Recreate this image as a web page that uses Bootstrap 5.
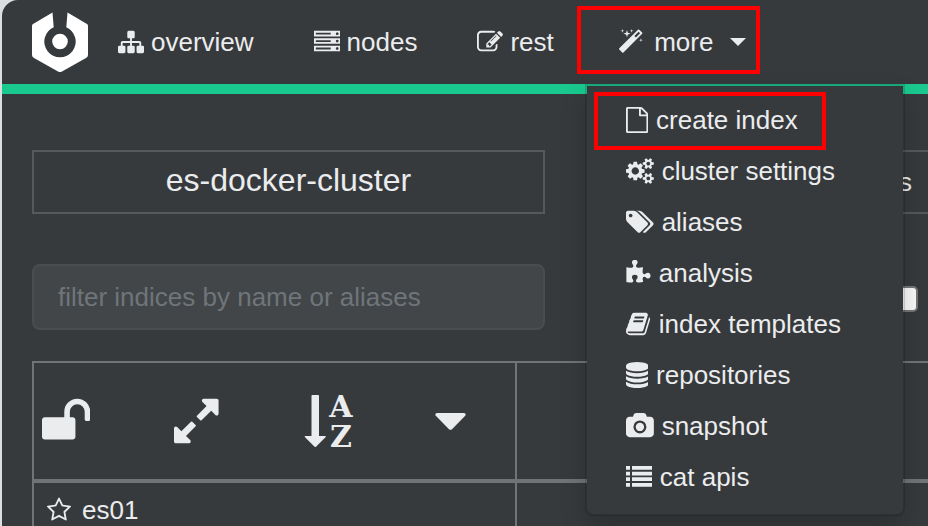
<!DOCTYPE html>
<html lang="en">
<head>
<meta charset="utf-8">
<meta name="viewport" content="width=device-width, initial-scale=1">
<title>es-docker-cluster</title>
<link href="https://cdn.jsdelivr.net/npm/bootstrap@5.3.0/dist/css/bootstrap.min.css" rel="stylesheet">
<style>
  :root { --panel: #373a3c; --ink: #ebecee; --line: #55595c; --grid: #707477; --ok: #1ac98e; --alert: #ff0000; }
  body { background: #dcdee1; color: var(--ink); font: 26px/30px "Liberation Sans", Arial, sans-serif; }
  .shell { margin-left: 2px; background: var(--panel); border-top-left-radius: 16px; }
  .topbar { border-bottom: 10px solid var(--ok); padding: 0 0 0 30px; }
  .topbar .navbar-brand { padding: 12px 0; margin: 0; line-height: 1; }
  .topbar .navbar-nav .nav-link { display: flex; align-items: center; gap: 7px; height: 84px; padding: 0 30px; color: var(--ink); font-size: 26px; border: 0; background: none; }
  .topbar .toggle-more::after { margin: 0 0 0 10px; border-top: 8px solid; border-right: 8px solid transparent; border-left: 8px solid transparent; border-bottom: 0; }
  .ico { height: 26px; width: auto; fill: currentColor; flex: none; }
  .ico-lg { height: 52px; width: auto; fill: currentColor; display: block; }
  .ico-lg text { font: bold 30px "DejaVu Serif", serif; }
  .callout-box { position: relative; }
  .callout-box > .frame { position: absolute; border: 4px solid var(--alert); pointer-events: none; }
  .frame-more { inset: 6px 16px 10px -7px; }
  .frame-create { inset: -13px -28px -15px -32px; }
  .navbar-nav .menu-more { position: absolute; top: 84px; left: 1px; width: 320px; padding: 10px 0; margin: 0; font-size: 26px; background: var(--panel); background-clip: padding-box; border: 2px solid rgba(0,0,0,.15); border-radius: 0 0 8px 8px; box-shadow: 0 12px 24px rgba(0,0,0,.175); }
  .menu-more .dropdown-item { display: flex; align-items: flex-start; padding: 9px 39px 12px; line-height: 30px; color: var(--ink); background: none; }
  .entry { display: inline-flex; align-items: center; gap: 8px; }
  .content-area { padding: 56px 0 0 30px; }
  .left-col { width: 513px; flex: none; }
  .stat { border: 2px solid var(--line); height: 64px; }
  .stat-title { font-size: 32px; line-height: 56px; font-weight: 400; margin: 0; }
  .filter-row { margin: 50px 0 31px; }
  .filter-box.form-control { height: 66px; padding: 0 24px; font-size: 26px; color: var(--ink); background: #434648; border: 2px solid #4b4c4e; border-radius: 8px; }
  .filter-box::placeholder { color: #6f757a; opacity: 1; }
  .tick.form-check-input { width: 26px; height: 26px; margin: 3px 10px 0 0; background-color: #fafafa; border: 2px solid #767676; border-radius: 5px; }
  .grid-table { table-layout: fixed; width: 100%; border-collapse: separate; border-spacing: 0; border-left: 2px solid var(--grid); border-top: 2px solid var(--grid); }
  .grid-table th, .grid-table td { font-weight: 400; padding: 0; }
  .grid-table th { height: 120px; border-bottom: 4px solid var(--grid); }
  .grid-table td { height: 58px; }
  .grid-table th:first-child, .grid-table td:first-child { width: 483px; border-right: 2px solid var(--grid); }
  .tool { border: 0; background: none; padding: 0; color: inherit; flex: 0 0 auto; }
  .tools { padding-left: 8px; gap: 84px; }
  .node-name { gap: 10px; padding-left: 12px; }
</style>
<script src="https://cdn.jsdelivr.net/npm/bootstrap@5.3.0/dist/js/bootstrap.bundle.min.js"></script>
</head>
<body class="vh-100 overflow-hidden">
<div class="shell min-vh-100">
  <nav class="topbar navbar navbar-expand align-items-start">
    <a class="navbar-brand" href="#" aria-label="Home">
      <svg width="56" height="60" viewBox="0 0 56 60" class="d-block"><path d="M20.500.5 1 12Q0 12.600 0 14V43Q0 45 2 46L26 59.500Q28 60.500 30 59.500L54 46Q56 45 56 43V14Q56 12.600 55 12L35.500.5 34.300 15.200A15.700 15.700 0 1 1 21.700 15.200Z" fill="#fff"/><circle cx="28" cy="29.500" r="7.800" fill="#fff"/></svg>
    </a>
    <ul class="navbar-nav">
      <li class="nav-item"><a class="nav-link" href="#">
        <svg class="ico" viewBox="0 0 1792 1792"><path d="M1792 1248v320q0 40-28 68t-68 28h-320q-40 0-68-28t-28-68v-320q0-40 28-68t68-28h96v-192h-512v192h96q40 0 68 28t28 68v320q0 40-28 68t-68 28h-320q-40 0-68-28t-28-68v-320q0-40 28-68t68-28h96v-192h-512v192h96q40 0 68 28t28 68v320q0 40-28 68t-68 28h-320q-40 0-68-28t-28-68v-320q0-40 28-68t68-28h96v-192q0-52 38-90t90-38h512v-192h-96q-40 0-68-28t-28-68v-320q0-40 28-68t68-28h320q40 0 68 28t28 68v320q0 40-28 68t-68 28h-96v192h512q52 0 90 38t38 90v192h96q40 0 68 28t28 68z"/></svg>overview</a></li>
      <li class="nav-item"><a class="nav-link" href="#">
        <svg class="ico" viewBox="0 0 1792 1792"><path d="M128 1408h1024v-128h-1024v128zm0-512h1024v-128h-1024v128zm1568 448q0-40-28-68t-68-28-68 28-28 68 28 68 68 28 68-28 28-68zm-1568-960h1024v-128h-1024v128zm1568 448q0-40-28-68t-68-28-68 28-28 68 28 68 68 28 68-28 28-68zm0-512q0-40-28-68t-68-28-68 28-28 68 28 68 68 28 68-28 28-68zm96 832v384h-1792v-384h1792zm0-512v384h-1792v-384h1792zm0-512v384h-1792v-384h1792z"/></svg>nodes</a></li>
      <li class="nav-item"><a class="nav-link" href="#">
        <svg class="ico" viewBox="0 0 1792 1792"><path d="M888 1184l116-116-152-152-116 116v56h96v96h56zm440-720q-16-16-33 1l-350 350q-17 17-1 33t33-1l350-350q17-17 1-33zm80 594v190q0 119-84.500 203.500t-203.500 84.500h-832q-119 0-203.500-84.500t-84.500-203.500v-832q0-119 84.500-203.500t203.500-84.500h832q63 0 117 25 15 7 18 23 3 17-9 29l-49 49q-14 14-32 8-23-6-45-6h-832q-66 0-113 47t-47 113v832q0 66 47 113t113 47h832q66 0 113-47t47-113v-126q0-13 9-22l64-64q15-15 35-7t20 29zm-96-738l288 288-672 672h-288v-288zm444 132l-92 92-288-288 92-92q28-28 68-28t68 28l152 152q28 28 28 68t-28 68z"/></svg>rest</a></li>
      <li class="nav-item dropdown callout-box">
        <button type="button" class="nav-link dropdown-toggle toggle-more show" data-bs-toggle="dropdown" data-bs-display="static" aria-expanded="true">
          <svg class="ico" viewBox="-256 0 2304 1792"><path d="M1254 581l293-293-107-107-293 293zm447-293q0 27-18 45l-1286 1286q-18 18-45 18t-45-18l-198-198q-18-18-18-45t18-45l1286-1286q18-18 45-18t45 18l198 198q18 18 18 45zm-1351-190l98 30-98 30-30 98-30-98-98-30 98-30 30-98zm350 162l196 60-196 60-60 196-60-196-196-60 196-60 60-196zm930 478l98 30-98 30-30 98-30-98-98-30 98-30 30-98zm-640-640l98 30-98 30-30 98-30-98-98-30 98-30 30-98z"/></svg>more</button>
        <span class="frame frame-more"></span>
        <ul class="dropdown-menu menu-more show">
          <li><a class="dropdown-item" href="#"><span class="entry callout-box">
            <svg class="ico" viewBox="128 0 1536 1792"><path d="M1596 380q28 28 48 76t20 88v1152q0 40-28 68t-68 28h-1344q-40 0-68-28t-28-68v-1600q0-40 28-68t68-28h896q40 0 88 20t76 48zm-444-244v376h376q-10-29-22-41l-313-313q-12-12-41-22zm384 1528v-1024h-416q-40 0-68-28t-28-68v-416h-768v1536h1280z"/></svg>create index<span class="frame frame-create"></span></span></a></li>
          <li><a class="dropdown-item" href="#"><span class="entry">
            <svg class="ico" viewBox="0 0 1920 1792"><path d="M896 896q0-106-75-181t-181-75-181 75-75 181 75 181 181 75 181-75 75-181zm768 512q0-52-38-90t-90-38-90 38-38 90q0 53 37.500 90.500t90.500 37.500 90.500-37.500 37.500-90.500zm0-1024q0-52-38-90t-90-38-90 38-38 90q0 53 37.500 90.500t90.500 37.500 90.500-37.500 37.500-90.500zm-384 421v185q0 10-7 19.500t-16 10.500l-155 24q-11 35-32 76 34 48 90 115 7 11 7 20 0 12-7 19-23 30-82.500 89.500t-78.500 59.500q-11 0-21-7l-115-90q-37 19-77 31-11 108-23 155-7 24-30 24h-186q-11 0-20-7.500t-10-17.500l-23-153q-34-10-75-31l-118 89q-7 7-20 7-11 0-21-8-144-133-144-160 0-9 7-19 10-14 41-53t47-61q-23-44-35-82l-152-24q-10-1-17-9.500t-7-19.500v-185q0-10 7-19.500t16-10.500l155-24q11-35 32-76-34-48-90-115-7-11-7-20 0-12 7-20 22-30 82-89t79-59q11 0 21 7l115 90q34-18 77-32 11-108 23-154 7-24 30-24h186q11 0 20 7.500t10 17.500l23 153q34 10 75 31l118-89q8-7 20-7 11 0 21 8 144 133 144 160 0 8-7 19-12 16-42 54t-45 60q23 48 34 82l152 23q10 2 17 10.500t7 19.500zm640 533v140q0 16-149 31-12 27-30 52 51 113 51 138 0 4-4 7-122 71-124 71-8 0-46-47t-52-68q-20 2-30 2t-30-2q-14 21-52 68t-46 47q-2 0-124-71-4-3-4-7 0-25 51-138-18-25-30-52-149-15-149-31v-140q0-16 149-31 13-29 30-52-51-113-51-138 0-4 4-7 4-2 35-20t59-34 30-16q8 0 46 46.500t52 67.500q20-2 30-2t30 2q51-71 92-112l6-2q4 0 124 70 4 3 4 7 0 25-51 138 17 23 30 52 149 15 149 31zm0-1024v140q0 16-149 31-12 27-30 52 51 113 51 138 0 4-4 7-122 71-124 71-8 0-46-47t-52-68q-20 2-30 2t-30-2q-14 21-52 68t-46 47q-2 0-124-71-4-3-4-7 0-25 51-138-18-25-30-52-149-15-149-31v-140q0-16 149-31 13-29 30-52-51-113-51-138 0-4 4-7 4-2 35-20t59-34 30-16q8 0 46 46.500t52 67.500q20-2 30-2t30 2q51-71 92-112l6-2q4 0 124 70 4 3 4 7 0 25-51 138 17 23 30 52 149 15 149 31z"/></svg>cluster settings</span></a></li>
          <li><a class="dropdown-item" href="#"><span class="entry">
            <svg class="ico" viewBox="0 0 1920 1792"><path d="M448 448q0-53-37.500-90.500t-90.500-37.500-90.500 37.500-37.500 90.500 37.500 90.500 90.500 37.500 90.500-37.500 37.500-90.500zm1067 576q0 53-37 90l-491 492q-39 37-91 37-53 0-90-37l-715-716q-38-37-64.500-101t-26.500-117v-416q0-52 38-90t90-38h416q53 0 117 26.500t102 64.500l715 714q37 39 37 91zm384 0q0 53-37 90l-491 492q-39 37-91 37-36 0-59-14t-53-45l470-470q37-37 37-90 0-52-37-91l-715-714q-38-38-102-64.500t-117-26.500h224q53 0 117 26.500t102 64.500l715 714q37 39 37 91z"/></svg>aliases</span></a></li>
          <li><a class="dropdown-item" href="#"><span class="entry">
            <svg class="ico" viewBox="64 0 1728 1792"><path d="M1755 1083q0 81-44.500 135t-123.500 54q-41 0-77.500-17.500t-59-38-56.500-38-71-17.500q-110 0-110 124 0 39 16 115t15 115v5q-22 0-33 1-34 3-97.500 11.500t-115.500 13.500-98 5q-61 0-103-26.500t-42-83.500q0-37 17.500-71t38-56.500 38-59 17.500-77.500q0-79-54-123.500t-135-44.500q-84 0-143 45.500t-59 127.500q0 43 15 83t33.500 64.500 33.500 53 15 50.500q0 45-46 89-37 35-117 35-95 0-245-24-9-2-27.500-4t-27.500-4l-13-2q-1 0-3-1-2 0-2-1v-1024q2 1 17.500 3.500t34 5 21.500 3.500q150 24 245 24 80 0 117-35 46-44 46-89 0-22-15-50.500t-33.500-53-33.500-64.500-15-83q0-82 59-127.500t144-45.500q80 0 134 44.500t54 123.500q0 41-17.500 77.500t-38 59-38 56.500-17.500 71q0 57 42 83.500t103 26.500q64 0 180-15t163-17v2q-1 2-3.500 17.500t-5 34-3.500 21.500q-24 150-24 245 0 80 35 117 44 46 89 46 22 0 50.500-15t53-33.500 64.500-33.500 83-15q82 0 127.500 59t45.500 143z"/></svg>analysis</span></a></li>
          <li><a class="dropdown-item" href="#"><span class="entry">
            <svg class="ico" viewBox="64 0 1728 1792"><path d="M1703 478q40 57 18 129l-275 906q-19 64-76.500 107.500t-122.500 43.500h-923q-77 0-148.500-53.500t-99.500-131.500q-24-67-2-127 0-4 3-27t4-37q1-8-3-21.500t-3-19.500q2-11 8-21t16.500-23.500 16.500-23.500q23-38 45-91.500t30-91.500q3-10 .5-30t-.5-28q3-11 17-28t17-23q21-36 42-92t25-90q1-9-2.500-32t.5-28q4-13 22-30.500t22-22.500q19-26 42.500-84.500t27.500-96.500q1-8-3-25.500t-2-26.500q2-8 9-18t18-23 17-21q8-12 16.500-30.500t15-35 16-36 19.500-32 26.500-23.500 36-11.500 47.500 5.500l-1 3q38-9 51-9h761q74 0 114 56t18 130l-274 906q-36 119-71.500 153.500t-128.500 34.500h-869q-27 0-38 15-11 16-1 43 24 70 144 70h923q29 0 56-15.500t35-41.500l300-987q7-22 5-57 38 15 59 43zm-1064 2q-4 13 2 22.500t20 9.500h608q13 0 25.500-9.500t16.500-22.500l21-64q4-13-2-22.500t-20-9.500h-608q-13 0-25.500 9.500t-16.500 22.500zm-83 256q-4 13 2 22.500t20 9.500h608q13 0 25.500-9.500t16.500-22.500l21-64q4-13-2-22.500t-20-9.500h-608q-13 0-25.500 9.500t-16.500 22.500z"/></svg>index templates</span></a></li>
          <li><a class="dropdown-item" href="#"><span class="entry">
            <svg class="ico" viewBox="128 0 1536 1792"><path d="M896 768q237 0 443-43t325-127v170q0 69-103 128t-280 93.500-385 34.500-385-34.500-280-93.500-103-128v-170q119 84 325 127t443 43zm0 768q237 0 443-43t325-127v170q0 69-103 128t-280 93.500-385 34.500-385-34.500-280-93.500-103-128v-170q119 84 325 127t443 43zm0-384q237 0 443-43t325-127v170q0 69-103 128t-280 93.500-385 34.500-385-34.500-280-93.500-103-128v-170q119 84 325 127t443 43zm0-1152q208 0 385 34.500t280 93.500 103 128v128q0 69-103 128t-280 93.500-385 34.500-385-34.500-280-93.500-103-128v-128q0-69 103-128t280-93.500 385-34.500z"/></svg>repositories</span></a></li>
          <li><a class="dropdown-item" href="#"><span class="entry">
            <svg class="ico" viewBox="0 0 1920 1792"><path d="M960 672q119 0 203.500 84.500t84.500 203.500-84.500 203.500-203.500 84.500-203.500-84.500-84.500-203.500 84.500-203.500 203.500-84.500zm704-416q106 0 181 75t75 181v896q0 106-75 181t-181 75h-1408q-106 0-181-75t-75-181v-896q0-106 75-181t181-75h224l51-136q19-49 69.500-84.500t103.500-35.500h512q53 0 103.500 35.500t69.500 84.500l51 136h224zm-704 1152q185 0 316.500-131.500t131.500-316.500-131.500-316.500-316.500-131.500-316.500 131.500-131.500 316.500 131.500 316.500 316.500 131.500z"/></svg>snapshot</span></a></li>
          <li><a class="dropdown-item" href="#"><span class="entry">
            <svg class="ico" viewBox="0 0 26 26"><path d="M0 2h4v3.700H0zM6 2h20v3.700H6zM0 7.700h4v3.700H0zM6 7.700h20v3.700H6zM0 13.300h4V17H0zM6 13.300h20V17H6zM0 19h4v3.700H0zM6 19h20v3.700H6z"/></svg>cat apis</span></a></li>
        </ul>
      </li>
    </ul>
  </nav>

  <main class="content-area">
    <div class="d-flex">
      <div class="left-col stat text-center"><h1 class="stat-title">es-docker-cluster</h1></div>
      <div class="stat flex-grow-1 d-flex align-items-center justify-content-end ms-5 border-end-0 pe-3">indices</div>
    </div>
    <div class="d-flex align-items-center filter-row">
      <div class="left-col"><input type="text" class="form-control filter-box" placeholder="filter indices by name or aliases" aria-label="filter indices by name or aliases"></div>
      <div class="ms-auto d-flex"><input type="checkbox" class="form-check-input tick" aria-label="closed"></div>
    </div>
    <table class="grid-table">
      <thead>
        <tr>
          <th scope="col"><div class="d-flex align-items-center tools">
            <button type="button" class="tool" aria-label="unlock"><svg class="ico-lg" viewBox="64 0 1664 1792"><path d="M1728 576v256q0 26-19 45t-45 19h-64q-26 0-45-19t-19-45v-256q0-106-75-181t-181-75-181 75-75 181v192h96q40 0 68 28t28 68v576q0 40-28 68t-68 28h-960q-40 0-68-28t-28-68v-576q0-40 28-68t68-28h672v-192q0-185 131.500-316.500t316.500-131.500 316.500 131.500 131.500 316.500z"/></svg></button>
            <button type="button" class="tool" aria-label="expand"><svg class="ico-lg" viewBox="128 0 1536 1792"><path d="M883 1056q0 13-10 23l-332 332 144 144q19 19 19 45t-19 45-45 19h-448q-26 0-45-19t-19-45v-448q0-26 19-45t45-19 45 19l144 144 332-332q10-10 23-10t23 10l114 114q10 10 10 23zm781-864v448q0 26-19 45t-45 19-45-19l-144-144-332 332q-10 10-23 10t-23-10l-114-114q-10-10-10-23t10-23l332-332-144-144q-19-19-19-45t19-45 45-19h448q26 0 45 19t19 45z"/></svg></button>
            <button type="button" class="tool" aria-label="sort by name"><svg class="ico-lg overflow-visible" viewBox="-2 0 48 52"><path d="M6.500 0.500Q6.500 0 7.200 0H13.200Q14 0 14 .7V41H20Q21.500 41 20.500 42.200L11 51.700Q10.300 52.300 9.600 51.700L0 42.200Q-1 41 .5 41H6.500Z"/><text x="36" y="22" text-anchor="middle">A</text><text x="36" y="52" text-anchor="middle">Z</text></svg></button>
            <button type="button" class="tool" aria-label="sort order"><svg class="ico-lg" viewBox="0 0 31 52"><path d="M2 18H29Q31.500 18.500 30.200 20.800L17 34.200Q15.500 35.500 14 34.200L.8 20.800Q-.5 18.500 2 18Z"/></svg></button>
          </div></th>
          <th scope="col"></th>
        </tr>
      </thead>
      <tbody>
        <tr>
          <td><span class="entry node-name"><svg class="ico" viewBox="0 0 1792 1792"><path d="M1201 1004l306-297-422-62-189-382-189 382-422 62 306 297-73 421 378-199 377 199zm527-357q0 22-26 48l-363 354 86 500q1 7 1 20 0 50-41 50-19 0-40-12l-449-236-449 236q-22 12-40 12-21 0-31.500-14.500t-10.500-35.500q0-6 2-20l86-500-364-354q-25-27-25-48 0-37 56-46l502-73 225-455q19-41 49-41t49 41l225 455 502 73q56 9 56 46z"/></svg>es01</span></td>
          <td></td>
        </tr>
      </tbody>
    </table>
  </main>
</div>
</body>
</html>
